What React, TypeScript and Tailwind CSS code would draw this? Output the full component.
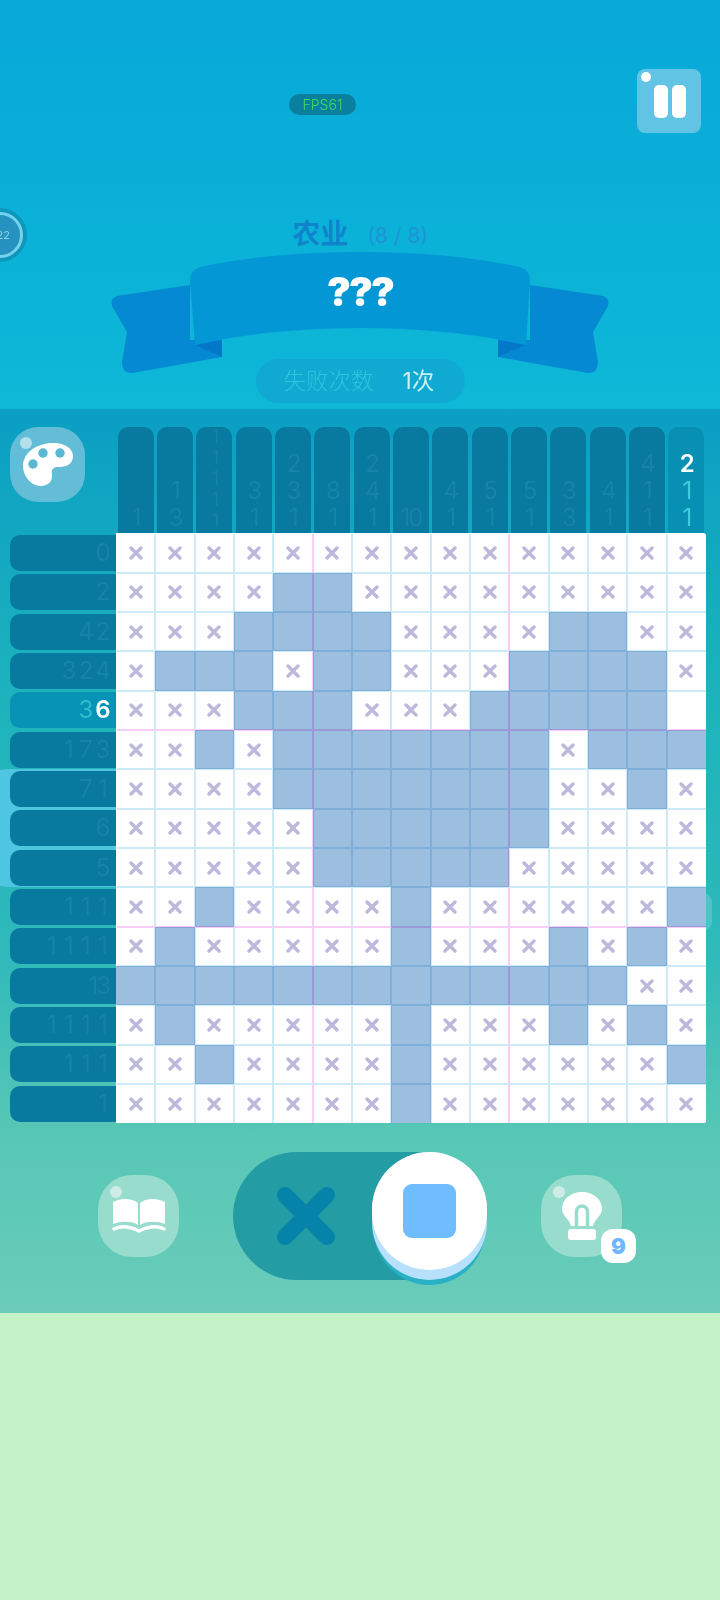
const FILLED: number[][] = [
  [],
  [4, 5],
  [3, 4, 5, 6, 11, 12],
  [1, 2, 3, 5, 6, 10, 11, 12, 13],
  [3, 4, 5, 9, 10, 11, 12, 13],
  [2, 4, 5, 6, 7, 8, 9, 10, 12, 13, 14],
  [4, 5, 6, 7, 8, 9, 10, 13],
  [5, 6, 7, 8, 9, 10],
  [5, 6, 7, 8, 9],
  [2, 7, 14],
  [1, 7, 11, 13],
  [0, 1, 2, 3, 4, 5, 6, 7, 8, 9, 10, 11, 12],
  [1, 7, 11, 13],
  [2, 7, 14],
  [7],
];

const ROW_CLUES = [['0'], ['2'], ['4', '2'], ['3', '2', '4'], ['3', '6'], ['1', '7', '3'], ['7', '1'], ['6'], ['5'], ['1', '1', '1'], ['1', '1', '1', '1'], ['13'], ['1', '1', '1', '1'], ['1', '1', '1'], ['1']];
const COL_CLUES = [['1'], ['1', '3'], ['1', '1', '1', '1', '1'], ['3', '1'], ['2', '3', '1'], ['8', '1'], ['2', '4', '1'], ['10'], ['4', '1'], ['5', '1'], ['5', '1'], ['3', '3'], ['4', '1'], ['4', '1', '1'], ['2', '1', '1']];
const ACTIVE_ROW = 4;
const ACTIVE_COL = 14;
const CELLS = Array.from({ length: 225 }, (_, i) => i);

function Shine({ className }: { className: string }) {
  return <span className={`absolute rounded-full ${className}`} />;
}

function Banner() {
  const tail = 'M190 285 L117 296 Q110 298 112 306 L127 332 L122 362 Q122 374 132 373 L222 357 V340 H190 Z';
  return (
    <div className="relative mx-auto h-[122px] w-[500px]">
      <svg viewBox="110 252 500 122" className="h-full w-full">
        <path d={tail} fill="#0589d2" />
        <path d={tail} fill="#0589d2" transform="matrix(-1 0 0 1 720 0)" />
        <path d="M195 345 L222 340 V357 Z" fill="#0478c8" />
        <path d="M525 345 L498 340 V357 Z" fill="#0478c8" />
        <path
          d="M190 280 Q190 270 200 267 Q270 252 360 252 Q450 252 520 267 Q530 270 530 280 L526 345 Q450 328 360 328 Q270 328 195 345 Z"
          fill="#0497d6"
        />
      </svg>
      <div className="absolute inset-x-0 top-[15px] text-center text-[40px] leading-[50px] font-black tracking-[-2px] text-white">???</div>
    </div>
  );
}

function Header() {
  return (
    <div className="relative h-[409px] bg-gradient-to-b from-[#08a8d9] to-[#0eb8d6] pt-[69px]">
      {/* timer cut off by the left edge */}
      <div className="absolute top-[208px] -left-[27px] h-[54px] w-[54px] rounded-full bg-[#0d97bd] p-[4px]">
        <div className="flex h-full w-full items-center justify-end rounded-full border-[3px] border-[#74d3ea] bg-[#2592bf] pr-[10px] text-[11px] text-[#8fd2e6]">22</div>
      </div>

      <div className="flex h-[64px] items-center">
        <div className="mt-[7px] ml-[289px] flex h-[21px] w-[67px] items-center justify-center rounded-full bg-[#0a7f9e] text-[14px] font-light text-[#3bdc5c]">FPS61</div>
        <button className="relative mr-[19px] ml-auto flex h-[64px] w-[64px] items-center justify-center gap-[4px] rounded-[8px] bg-[#62c4e4] pt-[1px] pl-[2px]">
          <Shine className="top-[3px] left-[4px] h-[10px] w-[10px] bg-white" />
          <span className="h-[33px] w-[14px] rounded-[5px] bg-white" />
          <span className="h-[33px] w-[14px] rounded-[5px] bg-white" />
        </button>
      </div>

      <div className="mt-[83px] flex h-[36px] items-center justify-center gap-[19px]">
        <span className="text-[28px] leading-[36px] font-bold text-[#0f84cc]">农业</span>
        <span className="mt-[4px] text-[21px] leading-[28px] text-[#1f92d6]">(8 / 8)</span>
      </div>

      <Banner />

      <div className="mx-auto -mt-[15px] flex h-[44px] w-[209px] items-center rounded-full bg-[#10a9d1] pl-[28px] text-[22.5px]">
        <span className="font-light text-[#2fc5dd]">失败次数</span>
        <span className="ml-[29px] text-[#c9f1f6]">1次</span>
      </div>
    </div>
  );
}

function ColClue({ nums, active }: { nums: string[]; active: boolean }) {
  const squeezed = nums.length > 3;
  return (
    <div className={`flex h-full w-[36px] flex-col items-center justify-end overflow-hidden rounded-t-[10px] pb-[2px] tracking-[-2px] ${active ? 'bg-[#0790b4]' : 'bg-[#08799f]'}`}>
      {nums.map((n, i) => (
        <span
          key={i}
          className={`${squeezed ? 'h-[21px] text-[18px] leading-[21px]' : 'h-[26.7px] text-[24px] leading-[26.7px]'} ${active ? (i === 0 ? 'font-semibold text-white' : 'text-[#3ccfdb]') : 'text-[#1584a7]'}`}
        >
          {n}
        </span>
      ))}
    </div>
  );
}

function RowClue({ nums, active }: { nums: string[]; active: boolean }) {
  return (
    <div className={`flex h-[36px] w-full items-center justify-end gap-[3px] rounded-l-[10px] pr-[7px] text-[24px] tracking-[-2px] ${active ? 'bg-[#0793b6]' : 'bg-[#08799f]'}`}>
      {nums.map((n, i) => (
        <span key={i} className={`min-w-[14px] text-center ${active ? (i === nums.length - 1 ? 'font-semibold text-white' : 'text-[#2cbccb]') : 'text-[#1584a7]'}`}>
          {n}
        </span>
      ))}
    </div>
  );
}

function Cell({ state }: { state: 'filled' | 'cross' | 'blank' }) {
  if (state === 'filled') return <div className="bg-[#9dbfdf]" />;
  return (
    <div className="flex items-center justify-center bg-white">
      {state === 'cross' && (
        <svg viewBox="0 0 14 14" className="h-[14px] w-[14px]">
          <path d="M2 2 L12 12 M12 2 L2 12" stroke="#bcb9dc" strokeWidth="3.4" strokeLinecap="round" />
        </svg>
      )}
    </div>
  );
}

function Board() {
  return (
    <div className="relative grid h-[590px] w-[590px] grid-cols-[repeat(15,1fr)] grid-rows-[repeat(15,1fr)] overflow-hidden rounded-tr-[3px] rounded-br-[2px]">
      {CELLS.map((i) => {
        const r = Math.floor(i / 15);
        const c = i % 15;
        const state = FILLED[r].includes(c) ? 'filled' : r === ACTIVE_ROW && c === ACTIVE_COL ? 'blank' : 'cross';
        return <Cell key={i} state={state} />;
      })}
      {/* grid lines tint whatever lies under them */}
      <div className="absolute inset-0 grid translate-x-px translate-y-px grid-cols-[repeat(15,1fr)] grid-rows-[repeat(15,1fr)] mix-blend-multiply">
        {CELLS.map((i) => {
          const r = Math.floor(i / 15);
          const c = i % 15;
          const right = c === 14 ? 'border-r-0' : c === 4 || c === 9 ? 'border-r-2 border-r-[#f8cdf7]' : 'border-r-2 border-r-[#cfeaf7]';
          const bottom = r === 14 ? 'border-b-0' : r === 4 || r === 9 ? 'border-b-2 border-b-[#f8cdf7]' : 'border-b-2 border-b-[#cfeaf7]';
          return <div key={i} className={`${right} ${bottom}`} />;
        })}
      </div>
    </div>
  );
}

function PaletteButton() {
  return (
    <button className="relative ml-[10px] flex h-[75px] w-[75px] items-center justify-center rounded-[28px] bg-[#63bdd6]">
      <Shine className="top-[10px] left-[10px] h-[12px] w-[12px] bg-[#b5dfea]" />
      <svg viewBox="0 0 50 43" className="h-[43px] w-[50px]">
        <path
          d="M28 0 C40 -1 50 5 50 13 C50 22 42 24 35 24 C30 24 28 27 29 31 C30 38 25 43 18 43 C8 43 0 33 0 23 C0 10 13 1 28 0 Z"
          fill="#fff"
        />
        <circle cx="20" cy="10" r="4.7" fill="#5ab8d2" />
        <circle cx="37" cy="10" r="4.7" fill="#5ab8d2" />
        <circle cx="10" cy="21" r="4.7" fill="#5ab8d2" />
      </svg>
    </button>
  );
}

function Controls() {
  return (
    <div className="mt-[29px] flex h-[128px] items-center pl-[98px]">
      <button className="relative flex h-[82px] w-[81px] items-center justify-center rounded-[34px] bg-[#97dccd]">
        <Shine className="top-[11px] left-[12px] h-[12px] w-[12px] bg-[#cdece6]" />
        <svg viewBox="0 0 54 37" className="h-[37px] w-[54px]">
          <path d="M1 4 C9 0 20 0 26 5 V27 C20 23 9 23 1 26 Z" fill="#fff" />
          <path d="M53 4 C45 0 34 0 28 5 V27 C34 23 45 23 53 26 Z" fill="#fff" />
          <path d="M2 31 C10 27 20 29 27 33 C34 29 44 27 52 31" fill="none" stroke="#fff" strokeWidth="3.4" strokeLinecap="round" />
        </svg>
      </button>

      <div className="relative ml-[54px] h-[128px] w-[254px]">
        <div className="flex h-full w-[200px] items-center rounded-l-full bg-[#239ca3] pl-[44px]">
          <svg viewBox="0 0 58 58" className="h-[58px] w-[58px]">
            <path d="M8 8 L50 50 M50 8 L8 50" stroke="#0583a8" strokeWidth="16" strokeLinecap="round" />
          </svg>
        </div>
        {/* knob sits over the track end */}
        <div className="absolute top-[5px] right-[2px] h-[128px] w-[111px] rounded-full bg-[#28b0c4]" />
        <div className="absolute top-0 right-0 h-[128px] w-[115px] rounded-full bg-[#b6e0fb]" />
        <div className="absolute top-0 right-0 flex h-[118px] w-[115px] items-center justify-center rounded-full bg-white">
          <div className="h-[54px] w-[53px] rounded-[9px] bg-[#6fbcff]" />
        </div>
      </div>

      <button className="relative ml-[54px] flex h-[82px] w-[81px] items-center justify-center rounded-[34px] bg-[#97dccd]">
        <Shine className="top-[11px] left-[12px] h-[12px] w-[12px] bg-[#cdece6]" />
        <svg viewBox="0 0 40 48" className="h-[48px] w-[40px]">
          <path d="M20 0 C31 0 40 7 40 17 C40 24 33 26 31 34 H9 C7 26 0 24 0 17 C0 7 9 0 20 0 Z" fill="#fff" />
          <path d="M14.5 34 V20 C14.5 12 25.5 12 25.5 20 V34" fill="none" stroke="#97dccd" strokeWidth="3.5" />
          <rect x="6" y="37" width="28" height="11" rx="3" fill="#fff" />
        </svg>
        <span className="absolute top-[54px] left-[60px] flex h-[34px] w-[35px] items-center justify-center rounded-[12px] bg-white text-[22px] font-black text-[#6fb8ff]">9</span>
      </button>
    </div>
  );
}

export default function App() {
  return (
    <div className="relative h-[1600px] w-[720px] overflow-hidden bg-[#c6f2c8] font-['Inter','Noto_Sans_CJK_SC',sans-serif]">
      <Header />

      <div className="relative h-[904px] bg-[linear-gradient(#0a9fc4,#1eb3bc_33%,#2fb9ba_60%,#57c7b6_80%,#6accb9)] pt-[18px]">
        {/* soft cloud behind the clue column */}
        <div className="absolute top-[360px] -left-[40px] h-[118px] w-[200px] rounded-[50px] bg-[#4ec6e2]" />
        <div className="absolute top-[483px] left-[690px] h-[40px] w-[22px] rounded-full bg-[#4fc4c6]" />

        <div className="relative grid grid-cols-[116px_590px] grid-rows-[106.33px_590px]">
          <PaletteButton />
          <div className="grid grid-cols-[repeat(15,1fr)] justify-items-center">
            {COL_CLUES.map((nums, i) => (
              <ColClue key={i} nums={nums} active={i === ACTIVE_COL} />
            ))}
          </div>
          <div className="grid grid-rows-[repeat(15,1fr)] items-center pl-[9.5px]">
            {ROW_CLUES.map((nums, i) => (
              <RowClue key={i} nums={nums} active={i === ACTIVE_ROW} />
            ))}
          </div>
          <Board />
        </div>

        <Controls />
      </div>
    </div>
  );
}
